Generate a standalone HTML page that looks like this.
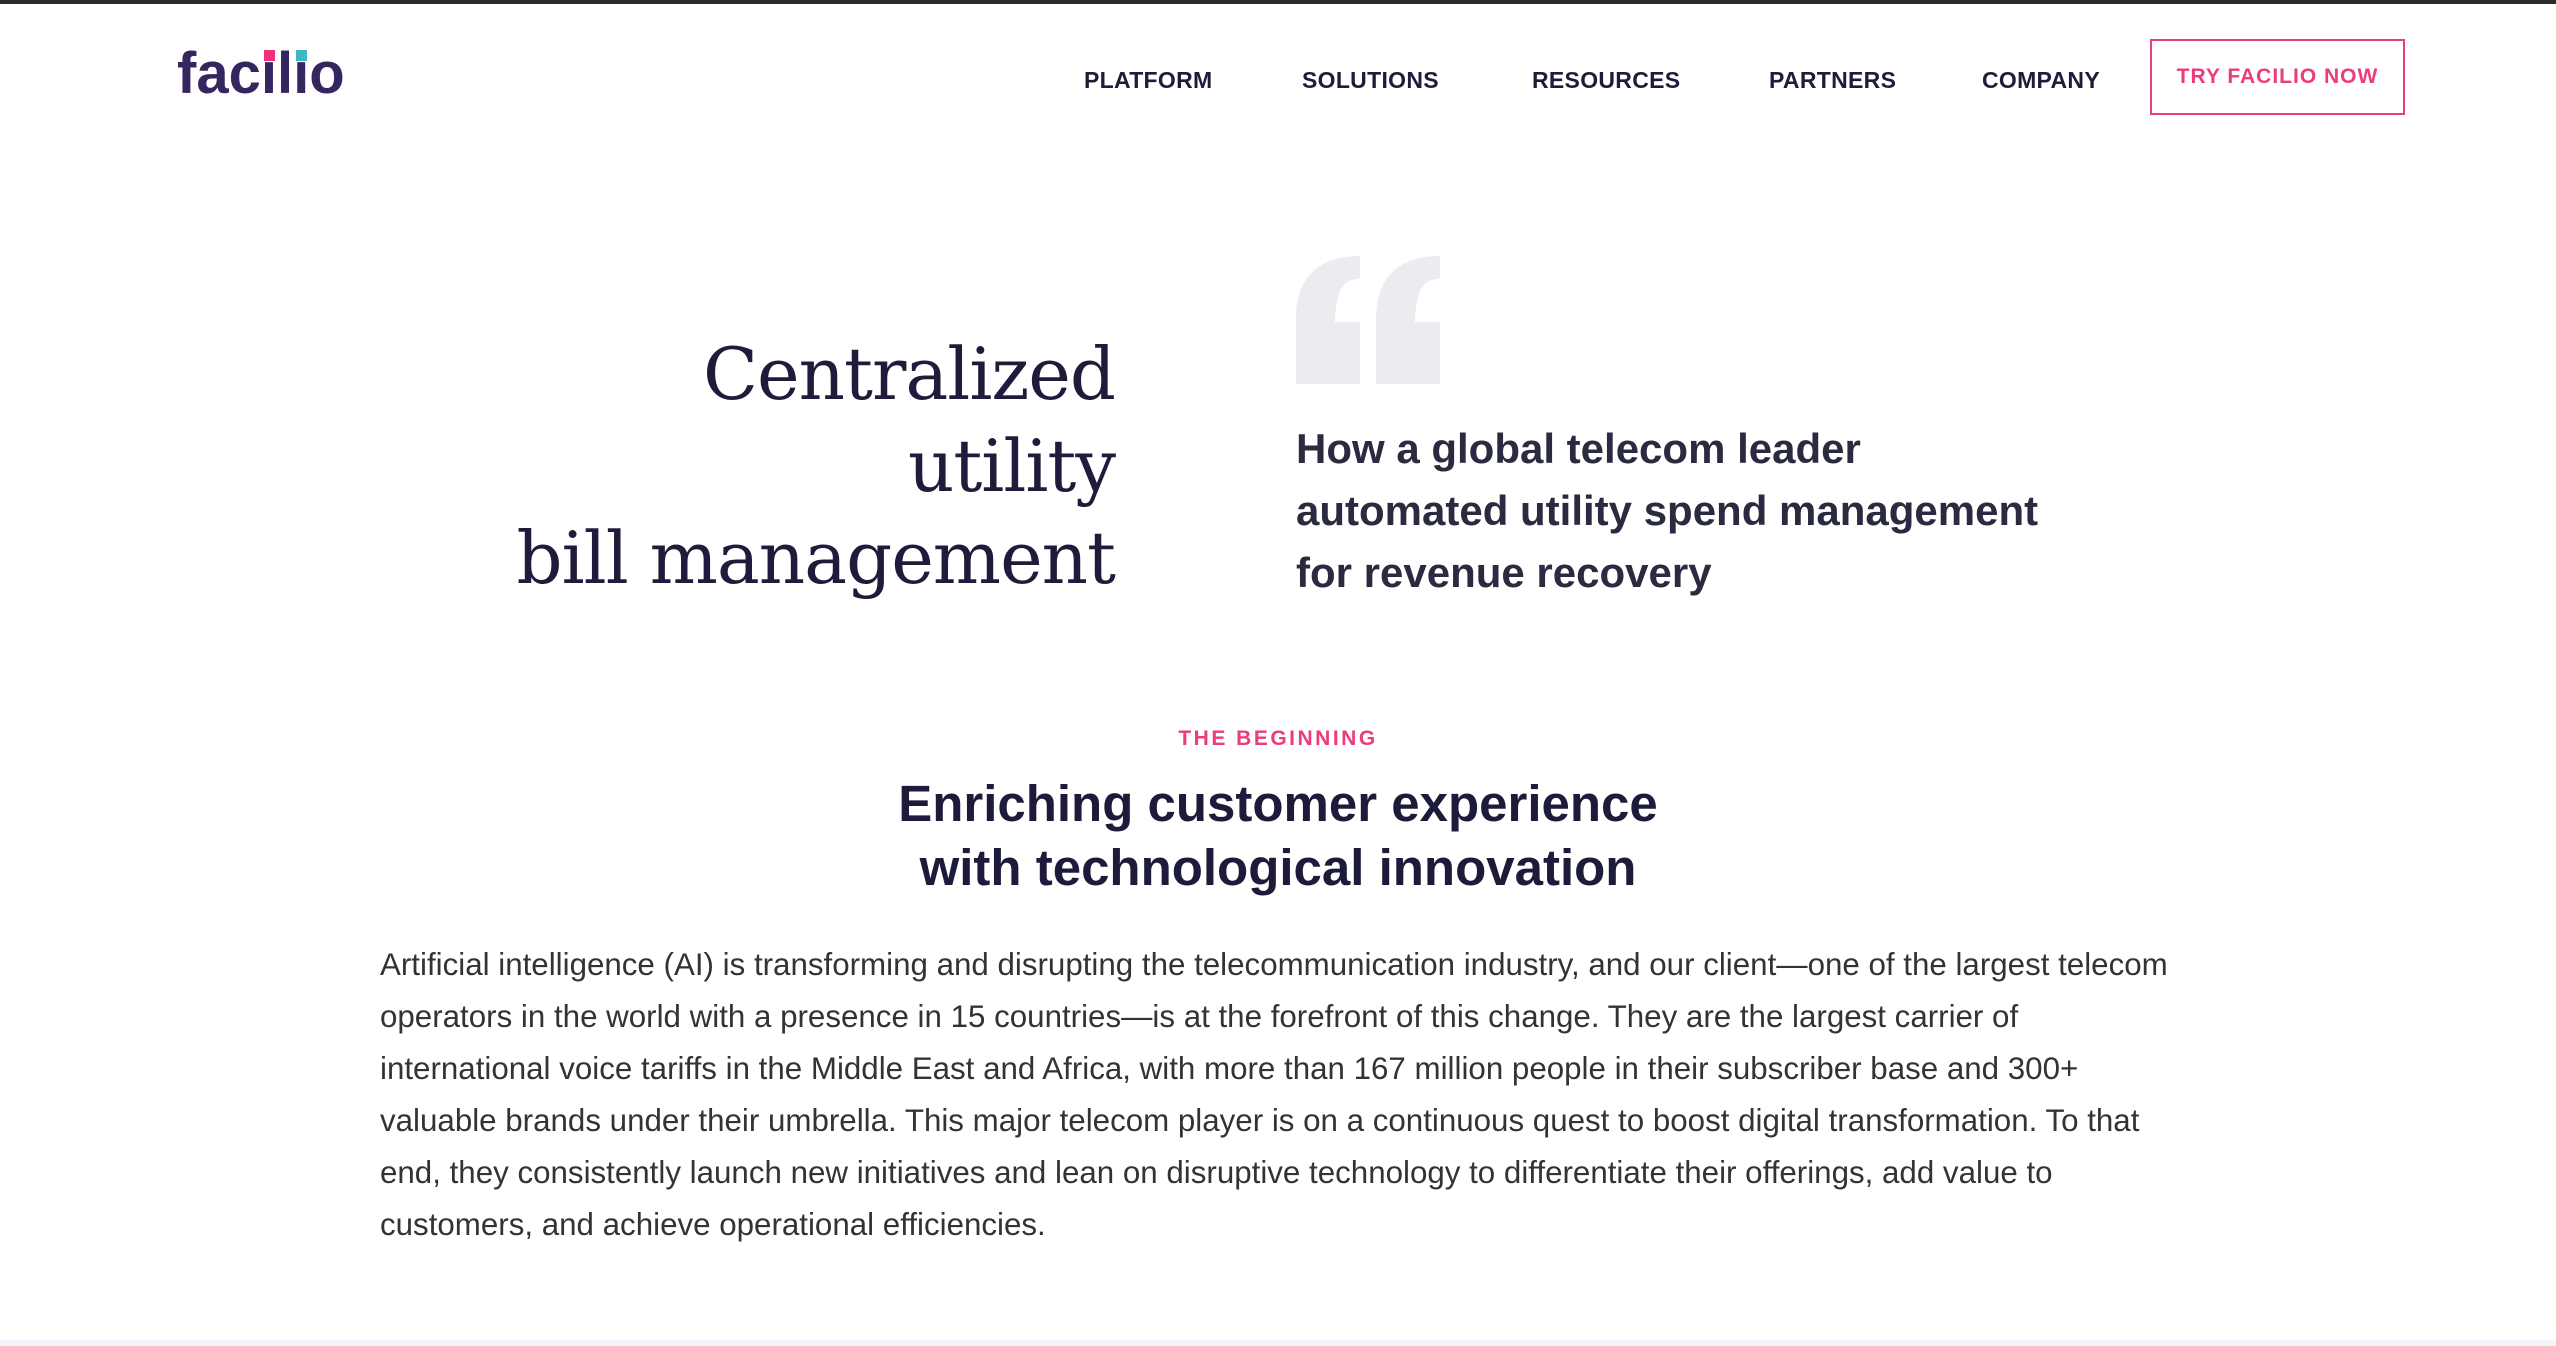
<!DOCTYPE html>
<html><head><meta charset="utf-8"><style>
*{margin:0;padding:0;box-sizing:border-box}
body{width:2556px;height:1346px;overflow:hidden;background:#fff;font-family:"Liberation Sans",sans-serif;position:relative;color:#1e1c3a}
.top{position:absolute;left:0;top:0;width:100%;height:4px;background:#2a2a2a}
.logo{position:absolute;left:177px;top:40px;font-size:58px;font-weight:bold;color:#35265f;letter-spacing:0px;white-space:nowrap}
.logo span{position:relative;display:inline-block}
.sq{position:absolute;width:11px;height:11px;left:50%;margin-left:-5px}
.nav a{position:absolute;top:67px;font-size:23px;font-weight:bold;color:#1e1c3a;text-decoration:none;letter-spacing:0.3px}
.btn{position:absolute;left:2150px;top:39px;width:255px;height:76px;border:2px solid #ec3b7e;color:#ec3b7e;font-size:21px;font-weight:bold;text-align:center;line-height:72px;letter-spacing:1px}
.h1{position:absolute;right:1441px;top:328px;text-align:right;font-family:"DejaVu Serif","Liberation Serif",serif;font-size:72px;line-height:92px;color:#1e1c3a;letter-spacing:-1px}
.qt{position:absolute;left:1296px;top:418px;font-size:42px;line-height:62px;font-weight:bold;color:#2a2a40}
.eyebrow{position:absolute;left:0;width:2556px;text-align:center;top:727px;font-size:21px;font-weight:bold;color:#ec3b7e;letter-spacing:2.5px}
.h2{position:absolute;left:0;width:2556px;text-align:center;top:772px;font-size:51px;line-height:64px;font-weight:bold;color:#1c1b3a}
.p{position:absolute;left:380px;top:939px;width:1800px;font-size:31.3px;line-height:52px;color:#333}
.bot{position:absolute;left:0;top:1340px;width:100%;height:6px;background:#f0f6fc}
</style></head><body>
<div class="top"></div>
<div class="logo">fac<span>ı<i class="sq" style="background:#f0317b;top:10px"></i></span>l<span>ı<i class="sq" style="background:#41b6c4;top:10px"></i></span>o</div>
<div class="nav">
<a style="left:1084px">PLATFORM</a>
<a style="left:1302px">SOLUTIONS</a>
<a style="left:1532px">RESOURCES</a>
<a style="left:1769px">PARTNERS</a>
<a style="left:1982px">COMPANY</a>
</div>
<div class="btn">TRY FACILIO NOW</div>
<div class="h1">Centralized<br>utility<br>bill management</div>
<svg style="position:absolute;left:1296px;top:256px" width="146" height="128" viewBox="0 0 146 128">
<path fill="#ecebf0" d="M64,0 L64,23 C48,23 40,32 39,66 L64,66 L64,128 L0,128 L0,64 C0,22 22,0 64,0 Z"/>
<path fill="#ecebf0" transform="translate(80,0)" d="M64,0 L64,23 C48,23 40,32 39,66 L64,66 L64,128 L0,128 L0,64 C0,22 22,0 64,0 Z"/>
</svg>
<div class="qt">How a global telecom leader<br>automated utility spend management<br>for revenue recovery</div>
<div class="eyebrow">THE BEGINNING</div>
<div class="h2">Enriching customer experience<br>with technological innovation</div>
<div class="p">Artificial intelligence (AI) is transforming and disrupting the telecommunication industry, and our client—one of the largest telecom operators in the world with a presence in 15 countries—is at the forefront of this change. They are the largest carrier of international voice tariffs in the Middle East and Africa, with more than 167 million people in their subscriber base and 300+ valuable brands under their umbrella. This major telecom player is on a continuous quest to boost digital transformation. To that end, they consistently launch new initiatives and lean on disruptive technology to differentiate their offerings, add value to customers, and achieve operational efficiencies.</div>
<div class="bot"></div>
</body></html>
